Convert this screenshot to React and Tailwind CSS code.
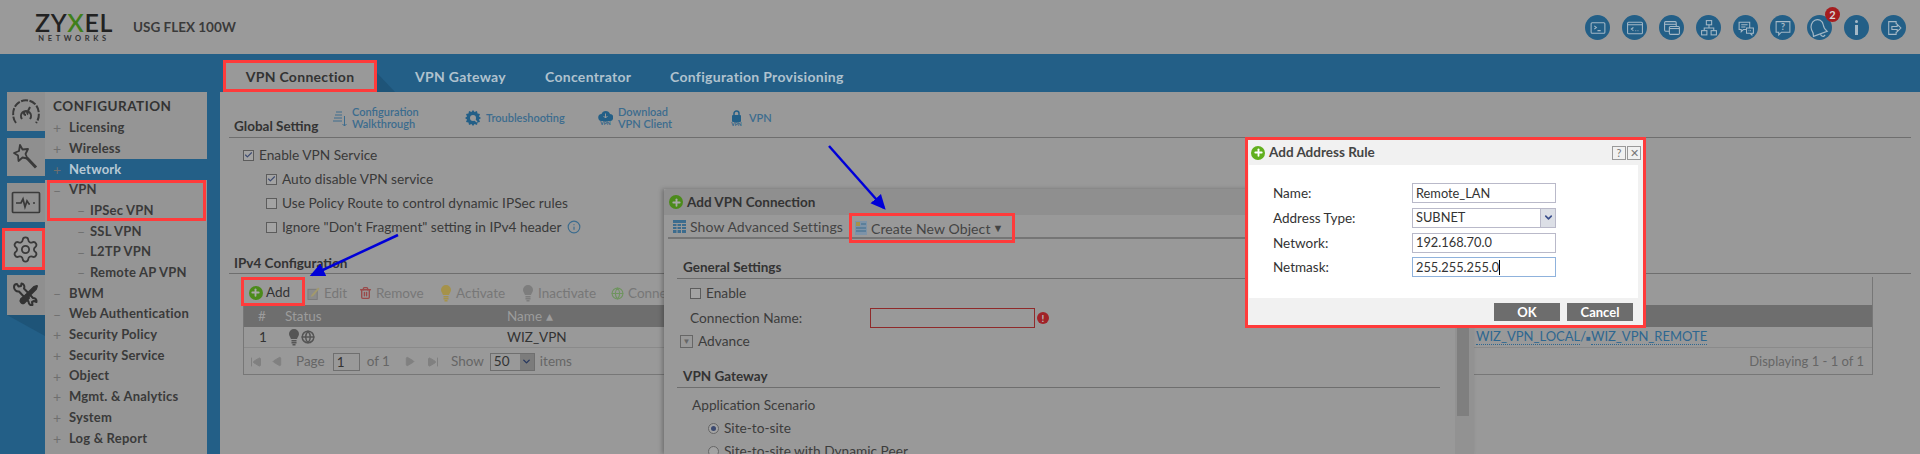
import React from 'react';
import { Settings, Globe, Trash2, Plus, ChevronDown, Info, Play, SkipBack, SkipForward, Check } from 'lucide-react';

const red = 'outline-3 -outline-offset-3 outline-[#ff3b3b]';

function CircleIcon({ children }) {
  return (
    <div className="w-[25px] h-[25px] rounded-full bg-[#235f87] flex items-center justify-center">
      <svg width="18" height="18" viewBox="0 0 17 17" fill="none" stroke="#a4b8c6" strokeWidth="1">{children}</svg>
    </div>
  );
}

function Header() {
  return (
    <header className="h-[54px] bg-[#9a9a9a] flex items-center shrink-0">
      <div className="ml-[35px] w-[78px] flex flex-col items-center pt-[1px]">
        <div className="text-[25px] leading-[23px] font-semibold tracking-[0.6px] text-[#222]">ZY<span className="text-[#3f7f1a]">X</span>EL</div>
        <div className="text-[7.5px] leading-[10px] font-bold tracking-[3.6px] text-[#333]">NETWORKS</div>
      </div>
      <div className="ml-[20px] text-[13.5px] font-bold text-[#3a3a3a]">USG FLEX 100W</div>
      <div className="ml-auto mr-[14px] flex gap-[12px] mt-[1px]">
        <CircleIcon><rect x="2" y="3.500" width="13" height="10" rx="1" /><path d="M5 6.500l2 1.500-2 1.500M8 11h3" /></CircleIcon>
        <CircleIcon><rect x="1.500" y="3" width="14" height="11" rx="1" /><path d="M1.500 5.500h14M7 8l-2 1.500 2 1.500M9 11h.6M11 11h.6" /></CircleIcon>
        <CircleIcon><rect x="1.500" y="2.500" width="11" height="9" rx="1" /><path d="M1.500 5h11" /><rect x="6" y="7" width="9.500" height="7.500" rx="1" fill="#235f87" /><path d="M6 9h9.500" /></CircleIcon>
        <CircleIcon><rect x="6" y="1.500" width="5" height="4" /><rect x="1.500" y="11" width="5" height="4" /><rect x="10.500" y="11" width="5" height="4" /><path d="M8.500 5.500v3M4 11V8.500h9V11" /></CircleIcon>
        <CircleIcon><path d="M2 3h10v7H6l-2 2v-2H2zM4 5.500h6M4 7.500h4" /><path d="M9 8.500h6.500v5H14v1.500L12.500 13.500H9z" fill="#235f87" /><path d="M11 11h.6M12.500 11h.6" /></CircleIcon>
        <CircleIcon><path d="M2 2.500h13v10H7l-2.500 2.500v-2.500H2z" /><text x="8.500" y="10.500" fontSize="9" fontWeight="700" fill="#a4b8c6" stroke="none" textAnchor="middle">?</text></CircleIcon>
        <div className="relative">
          <div className="w-[25px] h-[25px] rounded-full bg-[#235f87] flex items-center justify-center">
            <svg width="22" height="22" viewBox="0 0 17 17" fill="none" stroke="#a4b8c6" strokeWidth="0.900"><path d="M4.500 2.500c3-1.500 6 .5 6.500 3.500.4 2.500 1.500 4 3 5L3.500 15c0-2-.5-3.500-1.500-5C.8 7.500 2 3.800 4.500 2.500zM9 13.500c.3 1 1.500 1.800 2.500 1.300l1-1" /></svg>
          </div>
          <div className="absolute -top-[8px] right-[-8px] w-[15px] h-[15px] rounded-full bg-[#a51d1f] text-[#d8d8d8] text-[11px] leading-[15px] font-bold text-center">2</div>
        </div>
        <div className="w-[25px] h-[25px] rounded-full bg-[#235f87] flex flex-col items-center justify-center gap-[2px]">
          <div className="w-[3px] h-[3px] rounded-full bg-[#a4b8c6]" />
          <div className="w-[3px] h-[10px] bg-[#a4b8c6]" />
        </div>
        <CircleIcon><path d="M10.500 5V2.500H3.500v12h7V12M6.500 7h5V5l3.500 3.500-3.500 3.500v-2h-5z" /></CircleIcon>
      </div>
    </header>
  );
}

function Tabs() {
  return (
    <div className="h-[38px] shrink-0 flex items-end relative text-[14px] font-bold tracking-[0.3px]">
      <div className={`ml-[223px] w-[154px] h-[32px] bg-[#999] flex items-center justify-center text-[#333] ${red}`}>VPN Connection</div>
      <svg className="absolute left-[377px] top-[19px]" width="18" height="19"><polygon points="0,0 18,19 0,19" fill="#1e5478" /></svg>
      <div className="ml-[38px] w-[130px] h-[32px] flex items-center text-[#b0c2ce]">VPN Gateway</div>
      <div className="w-[125px] h-[32px] flex items-center text-[#b0c2ce]">Concentrator</div>
      <div className="h-[32px] flex items-center text-[#b0c2ce]">Configuration Provisioning</div>
    </div>
  );
}

function SideTab({ children, className = '' }) {
  return (
    <div className={`relative w-[38px] ml-[7px] flex items-center justify-center ${className}`}>
      {children}
    </div>
  );
}

function Rail() {
  const c = '#3a3a3a';
  return (
    <div className="w-[45px] shrink-0 flex flex-col">
      <SideTab className="h-[39px] bg-[#8f8f8f]">
        <svg width="30" height="28" viewBox="0 0 30 28" fill="none" stroke={c} strokeWidth="2">
          <path d="M5 25C1 20 1 11 6 6c5-5 13-5 18 0 5 5 5 14 1 19" strokeDasharray="7 1.500" />
          <path d="M11 21a5 5 0 1 1 8 0M15 17c-1.500 0-2-1-2-2s1.500-2 2.500-1.500c1 .5 1.500 2 .5 3" />
          <path d="M17 13l2-4" />
        </svg>
      </SideTab>
      <SideTab className="h-[38px] mt-[7px] bg-[#8f8f8f]">
        <svg width="28" height="28" viewBox="0 0 28 28" fill="none" stroke={c} strokeWidth="1.800" strokeLinejoin="round">
          <path d="M8 2l2.500 4.500 5.500-.5-2.500 5 2 4.500-5-1-4 3.500-.5-5.500L2 10l5-2z" />
          <path d="M15 15l9 9.500" strokeWidth="3" />
        </svg>
      </SideTab>
      <SideTab className="h-[39px] mt-[7px] bg-[#8f8f8f]">
        <svg width="30" height="24" viewBox="0 0 30 24" fill="none" stroke={c} strokeWidth="1.700"><rect x="1.500" y="1.500" width="27" height="20" rx="1" /><path d="M5 12h5l2-4 2 8 2-6 2 3h1M22 12h2" /></svg>
      </SideTab>
      <div className={`h-[42px] mt-[6px] ml-[2px] w-[43px] bg-[#9a9a9a] flex items-center justify-center pl-[3px] ${red}`}><Settings size={29} strokeWidth={1.500} className="text-[#3a3a3a]" /></div>
      <SideTab className="h-[40px] mt-[5px] bg-[#8f8f8f]">
        <svg width="28" height="26" viewBox="0 0 28 26" fill="none" stroke="#333" strokeWidth="2" strokeLinejoin="round">
          <path d="M2 5c0-2 1.500-3 3-3L6.500 4.500 9 4l.5-2.500C12 2 13 4.500 12 6.500L21 16c2 0 4 1.500 3.500 4L22 19l-2 1 .5 3c-2.500.5-4-1.500-4-3.500L7 9.500C4.500 10 2 8 2 5z" />
          <path d="M14 13l8-8 3-1-1 3-8 8z" fill="#333" />
          <path d="M9 17l5-4 3 3-5 5c-2 1.500-4.500-2-3-4z" fill="#333" />
        </svg>
      </SideTab>
      <svg className="ml-[7px]" width="38" height="21"><polygon points="0,0 38,0 38,21" fill="#1e5478" /></svg>
    </div>
  );
}

function Item({ label, open, sub, active }) {
  return (
    <div className={`h-[20.7px] flex items-center text-[13px] font-bold tracking-[0.2px] ${active ? 'bg-[#235f87] text-[#b8c9d4]' : 'text-[#3a3a3a]'} ${sub ? 'pl-[32px]' : 'pl-[8px]'}`}>
      <span className="w-[16px] text-[#6f6f6f] text-[14px] font-normal">{open ? '–' : '+'}</span>
      <span className={sub ? 'ml-[-3px]' : ''}>{label}</span>
    </div>
  );
}

function Sidebar() {
  return (
    <aside className="w-[162px] shrink-0 bg-[#959595] pt-[2px]">
      <div className="h-[23.6px] pl-[8px] flex items-center text-[13.5px] font-bold tracking-[0.5px] text-[#333]">CONFIGURATION</div>
      <Item label="Licensing" />
      <Item label="Wireless" />
      <Item label="Network" active />
      <div className={`ml-[2px] mr-[1px] ${red}`}>
        <div className="-ml-[2px]">
          <Item label="VPN" open />
          <Item label="IPSec VPN" open sub />
        </div>
      </div>
      <Item label="SSL VPN" open sub />
      <Item label="L2TP VPN" open sub />
      <Item label="Remote AP VPN" open sub />
      <Item label="BWM" open />
      <Item label="Web Authentication" open />
      <Item label="Security Policy" />
      <Item label="Security Service" />
      <Item label="Object" />
      <Item label="Mgmt. & Analytics" />
      <Item label="System" />
      <Item label="Log & Report" />
    </aside>
  );
}

function Box({ checked, className = '' }) {
  return (
    <span className={`w-[11px] h-[11px] border border-[#5c5c5c] bg-[#a3a3a3] flex items-center justify-center shrink-0 ${className}`}>
      {checked && <Check size={10} strokeWidth={3} className="text-[#3c4a70]" />}
    </span>
  );
}

function CheckRow({ checked, label, indent, children }) {
  return (
    <div className={`h-[24px] flex items-center gap-[5px] text-[13.7px] text-[#3a3a3a] ${indent ? 'pl-[23px]' : ''}`}>
      <Box checked={checked} />
      <span>{label}</span>
      {children}
    </div>
  );
}

function Section({ title, className = '', children }) {
  return <div className={`border-b border-[#6e6e6e] flex items-end text-[13.5px] font-bold text-[#333] ${className}`}>{title}{children}</div>;
}

function LinkItem({ icon, lines, className = '' }) {
  return (
    <div className={`flex items-center gap-[5px] text-[11px] leading-[12px] font-semibold text-[#3c6c8e] ${className}`}>
      {icon}
      <div>{lines.map(l => <div key={l}>{l}</div>)}</div>
    </div>
  );
}

function VpnCaption({ children }) {
  return (
    <span className="w-[15px] flex flex-col items-center text-[5px] leading-[5px] font-bold text-[#235f87]">
      {children}
      VPN
    </span>
  );
}

function Tool({ icon, label, className = '', dark }) {
  return (
    <div className={`flex items-center gap-[4px] text-[13.5px] ${dark ? 'text-[#333]' : 'text-[#777]'} ${className}`}>
      <span className="w-[13px] flex justify-center shrink-0">{icon}</span>
      <span className="whitespace-nowrap">{label}</span>
    </div>
  );
}

function Bulb({ color }) {
  return (
    <svg width="12" height="18" viewBox="0 0 12 18" fill={color}>
      <path d="M6 1a5 5 0 0 1 5 5c0 2-1.500 3-2 5H3c-.5-2-2-3-2-5a5 5 0 0 1 5-5z" />
      <rect x="3.500" y="12" width="5" height="1.500" />
      <rect x="3.500" y="14" width="5" height="1.500" />
      <rect x="4.500" y="16" width="3" height="1.500" />
    </svg>
  );
}

function PlusIcon({ size = 14 }) {
  return (
    <span className="rounded-full bg-[#4c8b1b] flex items-center justify-center shrink-0" style={{ width: size, height: size }}>
      <Plus size={size - 3} strokeWidth={4} className="text-[#a9a9a9]" />
    </span>
  );
}

function Main() {
  return (
    <main className="ml-[13px] flex-1 bg-[#999] pl-[9px] pr-[9px] relative">
      <Section title="Global Setting" className="h-[46px] pb-[1px] pl-[5px] relative">
        <div className="absolute left-[103px] top-[12px] flex items-center h-[28px]">
          <LinkItem className="w-[133px]" lines={['Configuration', 'Walkthrough']} icon={
            <svg width="15" height="17" viewBox="0 0 15 17" fill="none" stroke="#3c6c8e" strokeWidth="1"><path d="M4 2h6M3 5h7M2 8h8M1 11h9M12.500 6v10M10.500 14l2 2 2-2" /></svg>
          } />
          <LinkItem className="w-[133px]" lines={['Troubleshooting']} icon={
            <svg width="16" height="16" viewBox="0 0 16 16"><path d="M8 0l1.500 2 2.500-1 .5 2.500 2.500.5-1 2.500L16 8l-2 1.500 1 2.500-2.500.5-.5 2.500-2.500-1L8 16l-1.500-2-2.500 1-.5-2.500L1 12l1-2.500L0 8l2-1.500L1 4l2.500-.5L4 1l2.500 1z" fill="#235f87" /><circle cx="8" cy="8" r="3" fill="#999" /><path d="M9 9l3 3" stroke="#999" strokeWidth="1.500" /></svg>
          } />
          <LinkItem className="w-[131px]" lines={['Download', 'VPN Client']} icon={
            <VpnCaption>
              <svg width="15" height="11" viewBox="0 0 15 11"><path d="M4 11a3.500 3.500 0 0 1-.5-7A4.500 4.500 0 0 1 12 4a3.500 3.500 0 0 1-.5 7z" fill="#235f87" /><path d="M7.500 3.500V8M5.500 6l2 2 2-2" stroke="#999" fill="none" /></svg>
            </VpnCaption>
          } />
          <LinkItem lines={['VPN']} icon={
            <VpnCaption>
              <svg width="11" height="12" viewBox="0 0 11 12"><rect x="1" y="5" width="9" height="7" rx="1" fill="#235f87" /><path d="M3 5V3.500a2.500 2.500 0 0 1 5 0V5" fill="none" stroke="#235f87" strokeWidth="1.500" /></svg>
            </VpnCaption>
          } />
        </div>
      </Section>
      <div className="pl-[14px] pt-[5px]">
        <CheckRow checked label="Enable VPN Service" />
        <CheckRow checked indent label="Auto disable VPN service" />
        <CheckRow indent label="Use Policy Route to control dynamic IPSec rules" />
        <CheckRow indent label={'Ignore "Don\'t Fragment" setting in IPv4 header'}>
          <Info size={14} className="text-[#3c6c8e]" />
        </CheckRow>
      </div>
      <Section title="IPv4 Configuration" className="h-[35px] pb-0 pl-[5px]" />
      <div className="mx-[14px] mr-[38px] mt-[3px] border border-[#777] border-t-0">
        <div className="h-[28px] flex items-center pt-[4px]">
          <div className={`h-[29px] w-[64px] -ml-[3px] -mt-[4px] pt-[3px] pl-[8px] flex items-center shrink-0 ${red}`}>
            <Tool dark icon={<PlusIcon />} label="Add" />
          </div>
          <Tool className="ml-[2px] w-[52px]" label="Edit" icon={
            <svg width="14" height="16" viewBox="0 0 14 16"><rect x="1" y="4" width="10" height="11" fill="#8b8b8b" stroke="#7a7a7a" /><path d="M5 10l7-8 1.500 1.500-7 8L4 12z" fill="#a39a6c" /></svg>
          } />
          <Tool className="w-[80px]" label="Remove" icon={<Trash2 size={14} strokeWidth={2.500} className="text-[#9a4a4a]" />} />
          <Tool className="w-[82px]" label="Activate" icon={<Bulb color="#a5924a" />} />
          <Tool className="w-[90px]" label="Inactivate" icon={<Bulb color="#7d7d7d" />} />
          <Tool label="Connect" icon={<Globe size={15} strokeWidth={2} className="text-[#6f945f]" />} />
        </div>
        <div className="h-[22px] bg-[#6e6e6e] grid grid-cols-[41px_222px_969px_1fr] items-center text-[13.5px] text-[#9c9c9c]">
          <span className="pl-[14px]">#</span>
          <span>Status</span>
          <span>Name ▴</span>
          <span />
        </div>
        <div className="h-[21px] grid grid-cols-[41px_222px_969px_1fr] items-center text-[13.5px] text-[#333] border-b border-[#8a8a8a]">
          <span className="pl-[15px]">1</span>
          <span className="flex items-center pl-[3px] gap-[1px]"><Bulb color="#555" /><Globe size={14} strokeWidth={2.500} className="text-[#555]" /></span>
          <span>WIZ_VPN</span>
          <span className="text-[#2e6790] whitespace-nowrap text-[13px]"><span className="border-b border-dotted border-[#2e6790]">WIZ_VPN_LOCAL</span>/<span className="text-[8px]">■</span><span className="border-b border-dotted border-[#2e6790]">WIZ_VPN_REMOTE</span></span>
        </div>
        <div className="h-[26px] flex items-center text-[13.5px] text-[#666] pl-[6px] pt-[1px]">
          <SkipBack size={12} className="text-[#808080]" fill="#808080" />
          <Play size={11} className="text-[#808080] ml-[10px] rotate-180" fill="#808080" />
          <span className="ml-[13px]">Page</span>
          <span className="ml-[8px] w-[27px] h-[18px] border border-[#6f6f6f] text-[#333] pl-[3px] leading-[16px]">1</span>
          <span className="ml-[7px]">of 1</span>
          <Play size={11} className="text-[#808080] ml-[14px]" fill="#808080" />
          <SkipForward size={12} className="text-[#808080] ml-[12px]" fill="#808080" />
          <span className="ml-[12px]">Show</span>
          <span className="ml-[6px] w-[45px] h-[18px] border border-[#6f6f6f] flex items-center text-[#333] pl-[3px]">50
            <span className="ml-auto w-[14px] h-full bg-[#7c7c7c] flex items-center justify-center"><ChevronDown size={11} strokeWidth={3} className="text-[#28385f]" /></span>
          </span>
          <span className="ml-[5px]">items</span>
          <span className="ml-auto mr-[8px] text-[13px]">Displaying 1 - 1 of 1</span>
        </div>
      </div>
    </main>
  );
}

function Field({ children, focused, className = '' }) {
  return (
    <div className={`w-[144px] h-[20px] border ${focused ? 'border-[#8fb2dc]' : 'border-[#b9b9c9]'} bg-white pl-[3px] flex items-center text-[12.8px] text-[#333] ${className}`}>
      {children}
    </div>
  );
}

function AddressDialog() {
  const rows = [
    ['Name:', <Field key="n">Remote_LAN</Field>],
    ['Address Type:', <Field key="t" className="pr-0">SUBNET
      <span className="ml-auto w-[15px] h-full bg-[#dcdfe6] border-l border-[#b9b9c9] flex items-center justify-center"><ChevronDown size={11} strokeWidth={3.500} className="text-[#3b4f8c]" /></span>
    </Field>],
    ['Network:', <Field key="a">192.168.70.0</Field>],
    ['Netmask:', <Field key="m" focused>255.255.255.0<span className="w-px h-[15px] bg-black" /></Field>],
  ];
  return (
    <div className="absolute left-[1245px] top-[137px] w-[401px] h-[191px] border-[3px] border-[#ff3b3b] bg-[#f1f1f1] flex flex-col">
      <div className="h-[25px] shrink-0 flex items-center pl-[3px] pr-[2px] gap-[4px] text-[13.5px] font-bold text-[#444]">
        <span className="rounded-full bg-[#62b01e] w-[14px] h-[14px] flex items-center justify-center"><Plus size={11} strokeWidth={4} className="text-white" /></span>
        Add Address Rule
        <span className="ml-auto w-[14px] h-[14px] border border-[#999] text-[11px] leading-[12px] text-center font-normal text-[#777]">?</span>
        <span className="-ml-[3px] w-[14px] h-[14px] border border-[#999] text-[11px] leading-[12px] text-center font-normal text-[#777]">✕</span>
      </div>
      <div className="mx-px mr-[5px] h-[133px] shrink-0 bg-white pl-[24px] pt-[18px] flex flex-col gap-[4.500px]">
        {rows.map(([label, field]) => (
          <div key={label} className="flex items-center text-[13.5px] text-[#333]">
            <span className="w-[139px]">{label}</span>
            {field}
          </div>
        ))}
      </div>
      <div className="flex-1 flex justify-end items-start gap-[7px] pt-[5px] pr-[10px]">
        <button className="w-[66px] h-[18px] bg-[#6d6d6d] text-white text-[13px] font-bold leading-[18px]">OK</button>
        <button className="w-[66px] h-[18px] bg-[#6d6d6d] text-white text-[13px] font-bold leading-[18px]">Cancel</button>
      </div>
    </div>
  );
}

function VpnDialog() {
  return (
    <div className="absolute left-[664px] top-[189px] w-[810px] h-[265px] bg-[#999] shadow-[-2px_0_4px_rgba(0,0,0,0.25)] flex overflow-hidden">
      <div className="w-[791px] flex flex-col">
        <div className="h-[26px] shrink-0 bg-[#8f8f8f] flex items-center pl-[5px] gap-[4px] text-[13.5px] font-bold text-[#333] rounded-tl-[3px]">
          <PlusIcon size={14} /> Add VPN Connection
        </div>
        <div className="h-[24px] shrink-0 ml-[4px] border-b-2 border-[#757575] flex items-center text-[14px] tracking-[0.1px] text-[#444] relative">
          <span className="ml-[5px] flex items-center gap-[4px] whitespace-nowrap">
            <svg width="13" height="13" viewBox="0 0 13 13"><rect width="13" height="13" fill="#3c6c8e" /><path d="M0 3.500h13M0 6.500h13M0 9.500h13M4 3.500V13M8.500 3.500V13" stroke="#999" /></svg>
            Show Advanced Settings
          </span>
          <div className={`absolute left-[181px] top-[-2px] w-[166px] h-[30px] pl-[6px] flex items-center gap-[4px] whitespace-nowrap ${red}`}>
            <svg width="12" height="14" viewBox="0 0 12 14"><rect width="12" height="14" fill="#7d93a8" /><rect x="1" y="1" width="4" height="4" fill="#a5924a" /><path d="M6 3h5M1 7h10M1 10h10" stroke="#3c6c8e" /></svg>
            Create New Object<span className="text-[#444] text-[11px] -ml-[2px]">▼</span>
          </div>
        </div>
        <div className="pl-[13px]">
          <Section title="General Settings" className="h-[40px] pb-[1px] pl-[6px]" />
          <div className="pl-[13px] pt-[7px] text-[13.7px] text-[#3c3c3c]">
            <div className="h-[14px] flex items-center gap-[5px]"><Box />Enable</div>
            <div className="h-[20px] mt-[8px] flex items-center">
              <span className="w-[180px]">Connection Name:</span>
              <span className="w-[165px] h-[20px] border border-[#8f2a2a]" />
              <span className="ml-[2px] w-[12px] h-[12px] rounded-full bg-[#a12228] text-[#bbb] text-[10px] leading-[12px] font-bold text-center">!</span>
            </div>
            <div className="h-[14px] mt-[6px] -ml-[10px] flex items-center gap-[5px]">
              <span className="w-[13px] h-[13px] border border-[#666] flex items-center justify-center text-[8px] text-[#666]">▼</span>Advance
            </div>
          </div>
          <Section title="VPN Gateway" className="h-[40px] pb-[1px] pl-[6px] mr-[15px]" />
          <div className="pl-[15px] pt-[8px] text-[13.7px] text-[#3c3c3c]">
            <div className="h-[18px] flex items-center">Application Scenario</div>
            <div className="h-[23px] pl-[16px] mt-[3px] flex items-center gap-[5px]"><span className="w-[11px] h-[11px] rounded-full border border-[#666] bg-[#a3a3a3] flex items-center justify-center"><span className="w-[5px] h-[5px] rounded-full bg-[#3c4a70]" /></span>Site-to-site</div>
            <div className="h-[23px] pl-[16px] flex items-center gap-[5px]"><span className="w-[11px] h-[11px] rounded-full border border-[#666] bg-[#a3a3a3]" />Site-to-site with Dynamic Peer</div>
          </div>
        </div>
      </div>
      <div className="flex-1 bg-[#929292] pl-[2px] pr-[5px] pt-[30px]">
        <div className="w-[12px] h-[197px] bg-[#7f7f7f]" />
      </div>
    </div>
  );
}

function Arrow({ x1, y1, x2, y2 }) {
  return <line x1={x1} y1={y1} x2={x2} y2={y2} stroke="#0000d8" strokeWidth="2.500" markerEnd="url(#head)" />;
}

export default function App() {
  return (
    <div className="relative w-[1920px] h-[454px] overflow-hidden bg-[#235f87] flex flex-col font-['Lato',sans-serif]">
      <Header />
      <Tabs />
      <div className="flex flex-1">
        <Rail />
        <Sidebar />
        <Main />
      </div>
      <VpnDialog />
      <AddressDialog />
      <svg className="absolute inset-0 pointer-events-none" width="1920" height="454">
        <defs>
          <marker id="head" markerWidth="6" markerHeight="6" refX="5" refY="3" orient="auto"><path d="M0 0.200L6 3L0 5.800z" fill="#0000d8" /></marker>
        </defs>
        <Arrow x1={829} y1={146} x2={884} y2={208} />
        <Arrow x1={398} y1={235} x2={312} y2={275} />
      </svg>
    </div>
  );
}
